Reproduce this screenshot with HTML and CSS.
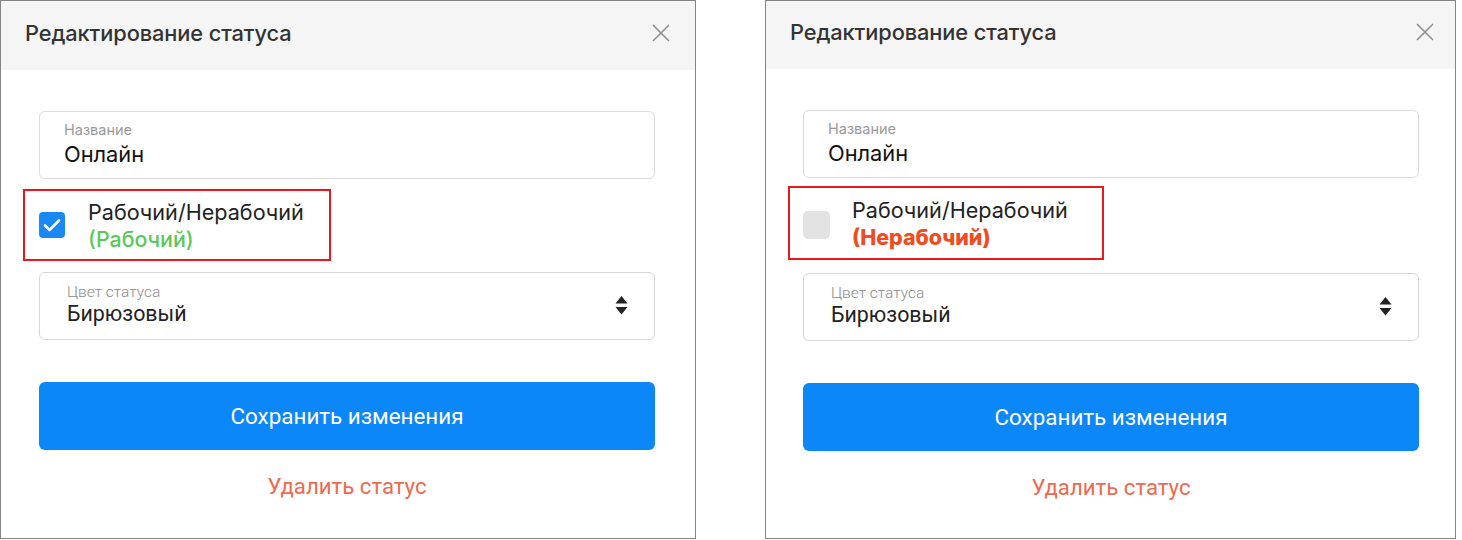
FILE: index.html
```html
<!DOCTYPE html>
<html lang="ru">
<head>
<meta charset="utf-8">
<title>Редактирование статуса</title>
<link rel="stylesheet" href="styles.css">
</head>
<body>
<div class="page">
  <section class="modal modal--left">
    <header class="modal__head">
      <h2 class="modal__title">Редактирование статуса</h2>
      <button class="modal__close" aria-label="Закрыть">
        <svg width="18" height="18" viewBox="0 0 18 18"><path d="M1 1L17 17M17 1L1 17" stroke="#8e8e8e" stroke-width="1.6" fill="none"/></svg>
      </button>
    </header>
    <div class="modal__body">
      <div class="field">
        <div class="field__label">Название</div>
        <div class="field__value">Онлайн</div>
      </div>
      <div class="check">
        <span class="check__box check__box--on">
          <svg width="18" height="14" viewBox="0 0 18 14"><path d="M2 7.5L6.5 12L16 2.5" stroke="#fff" stroke-width="2.6" fill="none" stroke-linecap="round" stroke-linejoin="round"/></svg>
        </span>
        <span class="check__text">
          <span class="check__title">Рабочий/Нерабочий</span>
          <span class="check__state check__state--on">(Рабочий)</span>
        </span>
      </div>
      <div class="select">
        <div class="select__text">
          <div class="select__label">Цвет статуса</div>
          <div class="select__value">Бирюзовый</div>
        </div>
        <svg class="select__arrows" width="13" height="19" viewBox="0 0 13 19"><path d="M6.5 0L12.5 7.5H0.5Z M0.5 11H12.5L6.5 18.5Z" fill="#222"/></svg>
      </div>
      <button class="btn">Сохранить изменения</button>
      <a class="delete">Удалить статус</a>
    </div>
  </section>

  <section class="modal modal--right">
    <header class="modal__head">
      <h2 class="modal__title">Редактирование статуса</h2>
      <button class="modal__close" aria-label="Закрыть">
        <svg width="18" height="18" viewBox="0 0 18 18"><path d="M1 1L17 17M17 1L1 17" stroke="#8e8e8e" stroke-width="1.6" fill="none"/></svg>
      </button>
    </header>
    <div class="modal__body">
      <div class="field">
        <div class="field__label">Название</div>
        <div class="field__value">Онлайн</div>
      </div>
      <div class="check">
        <span class="check__box"></span>
        <span class="check__text">
          <span class="check__title">Рабочий/Нерабочий</span>
          <span class="check__state check__state--off">(Нерабочий)</span>
        </span>
      </div>
      <div class="select">
        <div class="select__text">
          <div class="select__label">Цвет статуса</div>
          <div class="select__value">Бирюзовый</div>
        </div>
        <svg class="select__arrows" width="13" height="19" viewBox="0 0 13 19"><path d="M6.5 0L12.5 7.5H0.5Z M0.5 11H12.5L6.5 18.5Z" fill="#222"/></svg>
      </div>
      <button class="btn">Сохранить изменения</button>
      <a class="delete">Удалить статус</a>
    </div>
  </section>
</div>
</body>
</html>
```

FILE: styles.css
```css
* { box-sizing: border-box; }
html, body { margin: 0; padding: 0; background: #fff; }
body { font-family: "Roboto", "Liberation Sans", sans-serif; }

.page {
  display: flex;
  align-items: flex-start;
  gap: 69px;
  width: 1462px;
  height: 540px;
}

.modal {
  height: 539px;
  border: 1px solid #858585;
  background: #fff;
  display: flex;
  flex-direction: column;
}
.modal--left { width: 696px; }
.modal--right { width: 691px; }

.modal__head {
  height: 69px;
  background: #f5f5f5;
  display: flex;
  align-items: center;
  justify-content: space-between;
  padding: 0 25px 6px 24px;
}
.modal--right .modal__head { height: 68px; padding-right: 21px; }

.modal__title {
  margin: 0;
  font-family: "Inter", "Noto Sans", sans-serif;
  font-size: 21.8px;
  font-weight: 500;
  color: #333;
  letter-spacing: -0.1px;
}
.modal__close {
  border: 0;
  background: none;
  padding: 0;
  width: 18px;
  height: 18px;
  display: flex;
}

.modal__body {
  padding: 41px 0 0 38px;
  display: flex;
  flex-direction: column;
  align-items: flex-start;
}
.modal--right .modal__body { padding-left: 37px; }

.field {
  width: 616px;
  height: 68px;
  border: 1px solid #dcdcdc;
  border-radius: 6px;
  padding: 9px 0 0 24px;
  font-family: "Inter", "Noto Sans", sans-serif;
}
.field__label {
  font-size: 14.5px;
  line-height: 18px;
  color: #9a9a9a;
}
.field__value {
  margin-top: 2px;
  font-size: 21.8px;
  line-height: 26px;
  color: #111;
}

.check {
  margin: 10px 0 0 -16px;
  width: 308px;
  height: 72px;
  border: 2px solid #e8161f;
  display: flex;
  align-items: center;
  padding-left: 14px;
  gap: 23px;
  font-family: "Inter", "Noto Sans", sans-serif;
}
.modal--right .check {
  margin: 8px 0 0 -15px;
  width: 316px;
  height: 74px;
  padding-left: 13px;
  gap: 22px;
}
.check__box {
  width: 26px;
  height: 26px;
  border-radius: 4px;
  background: #e3e3e3;
  display: flex;
  align-items: center;
  justify-content: center;
}
.modal--right .check__box { width: 27px; height: 28px; border-radius: 5px; margin-top: 4px; }
.check__box--on { background: #1a88f5; }
.check__text { display: flex; flex-direction: column; }
.check__title {
  font-size: 21.6px;
  line-height: 27px;
  color: #222;
}
.check__state { font-size: 21.4px; line-height: 26px; }
.check__state--on { color: #5cc85a; font-weight: 500; }
.check__state--off { color: #f04c22; font-weight: 800; }

.select {
  margin-top: 11px;
  width: 616px;
  height: 68px;
  border: 1px solid #d6d6d6;
  border-radius: 6px;
  padding: 0 26px 2px 27px;
  display: flex;
  align-items: center;
  justify-content: space-between;
}
.modal--right .select { margin-top: 13px; }
.select__label {
  font-size: 15.5px;
  line-height: 17px;
  font-weight: 300;
  color: #8a8a8a;
}
.select__value {
  font-size: 21.4px;
  line-height: 25px;
  color: #222;
}

.btn {
  margin-top: 42px;
  width: 616px;
  height: 68px;
  border: 0;
  border-radius: 6px;
  background: #0b87f7;
  color: #fff;
  font-family: "Roboto", "Liberation Sans", sans-serif;
  font-size: 22.4px;
  padding: 0;
}
.delete {
  width: 616px;
  margin-top: 23px;
  text-align: center;
  font-size: 22.2px;
  line-height: 26px;
  color: #ee6a50;
}
```
